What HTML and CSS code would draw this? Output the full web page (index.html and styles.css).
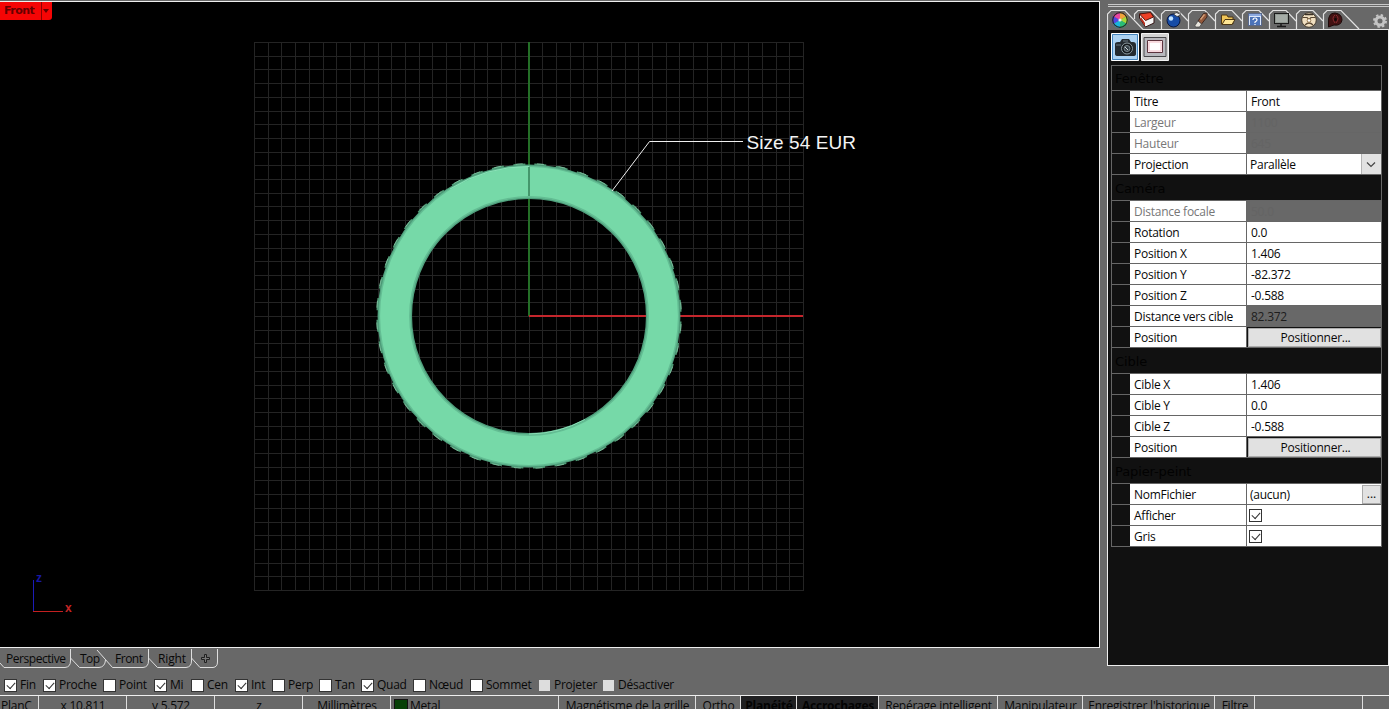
FILE: index.html
```
<!DOCTYPE html>
<html lang="fr">
<head>
<meta charset="utf-8">
<title>Front</title>
<link rel="stylesheet" href="styles.css">
</head>
<body>
<div class="app">
  <div class="work">
    <div class="left">
      <main class="viewport">
        <svg class="scene" width="1099" height="645" viewBox="0 2 1099 645">
          <g id="lines" stroke="#242424" shape-rendering="crispEdges" fill="none"></g>
          <path d="M529 42V316" stroke="#246f27" stroke-width="2"/>
          <path d="M529 316H803" stroke="#c5262c" stroke-width="2"/>
          <circle cx="529" cy="316" r="151.700" fill="none" stroke="#4f9a75" stroke-width="1.800" stroke-dasharray="12 9.670" transform="rotate(-88 529 316)"/>
          <circle cx="529" cy="316" r="152.300" fill="none" stroke="#86c9a7" stroke-width=".8" stroke-dasharray="7 14.750" transform="rotate(-87 529 316)"/>
          <circle cx="529" cy="316" r="134.200" fill="none" stroke="#4f9f7c" stroke-width="34.500"/>
          <circle cx="529" cy="316" r="134.300" fill="none" stroke="#63bd93" stroke-width="32"/>
          <circle cx="529" cy="316" r="134.400" fill="none" stroke="#76d9a8" stroke-width="29"/>
          <path d="M450 189A149.500 149.500 0 0 1 529 166.500" fill="none" stroke="#8ae4b8"/>
          <path d="M529 434A118 118 0 0 0 585 419.500" fill="none" stroke="#8adfb6"/>
          <path d="M529 167V196" stroke="#39865d" stroke-width="1.600"/>
          <path d="M612 191L649.500 141.500H743" fill="none" stroke="#eee"/>
          <text class="size" x="746.500" y="149" textLength="109.500">Size 54 EUR</text>
          <path d="M33 580h1v31h-1z" fill="#1c1cb8"/>
          <path d="M33 611h30v1h-30z" fill="#c42020"/>
          <text class="axis z" x="36" y="582">z</text>
          <text class="axis x" x="65" y="612">x</text>
        </svg>
        <div class="vtitle"><b>Front</b><i></i></div>
      </main>
      <svg class="tabs" width="1099" height="21" viewBox="0 648 1099 21">
        <path d="M0 663L4 667.5H65Q70.500 667 70.500 661V649M70.500 658L79.500 667.500H99Q105 667 105.500 660M97 650L112.500 667.500H143Q148.500 667 148.500 661V649M148.500 658L157.500 667.500H186Q191.500 667 191.500 661V649M191.500 658L200 667.500H213Q217.500 667 217.500 662V649" fill="none" stroke="#dedede"/>
        <text x="6" y="663" textLength="60">Perspective</text>
        <text x="80" y="663" textLength="20">Top</text>
        <text x="115" y="663" textLength="28">Front</text>
        <text x="158" y="663" textLength="28">Right</text>
        <path d="M204.500 654.500h2v3h3v2h-3v3h-2v-3h-3v-2h3z" fill="#777" stroke="#202020"/>
      </svg>
    </div>
    <aside class="side">
      <svg class="ptabs" width="282" height="30" viewBox="1107 0 282 30">
        <path d="M1108 4.500H1389M1108 6.500H1389" stroke="#c9c9c9"/>
        <g fill="none" stroke="#e2e2e2" stroke-width="1.200">
          <path d="M1107.500 30V14L1111 10.500H1125L1143 29.500H1389"/>
          <path d="M1134.500 19V14L1138 10.500H1151L1161 21"/>
          <path id="t" d="M1161.500 29V14L1165 10.500H1178L1188 21"/>
          <use href="#t" x="27"/><use href="#t" x="54"/><use href="#t" x="81"/><use href="#t" x="108"/><use href="#t" x="135"/>
          <path d="M1323.500 29V14L1327 10.500H1341L1359 29"/>
        </g>
        <g>
          <path d="M1120 20V12A8 8 0 0 1 1127 16z" fill="#f1a33a"/><path d="M1120 20L1127 16A8 8 0 0 1 1127 24z" fill="#a6d835"/><path d="M1120 20L1127 24A8 8 0 0 1 1120 28z" fill="#28bd75"/><path d="M1120 20V28A8 8 0 0 1 1113 24z" fill="#1ab6dc"/><path d="M1120 20L1113 24A8 8 0 0 1 1113 16z" fill="#5145e4"/><path d="M1120 20L1113 16A8 8 0 0 1 1120 12z" fill="#e944a0"/>
          <circle cx="1120" cy="20" r="7.300" fill="none" stroke="#282828" stroke-width="1.200"/><circle cx="1120" cy="20" r="1.600" fill="#eee"/>
        </g>
        <path d="M1139.500 14V18L1145.500 27L1154 23V17L1151 13z" fill="#f5f5f5" stroke="#331313"/><path d="M1139.500 14L1150.500 12.500L1153.500 17L1145.500 20.500z" fill="#ed4026" stroke="#52150d"/><path d="M1141 17l4 6v3l-5-7z" fill="#b82d1b"/>
        <circle cx="1173.500" cy="20.500" r="6.500" fill="#174ca6" stroke="#08163f"/><circle cx="1171" cy="18.500" r="2.200" fill="#c0e2ff"/><path d="M1174 14.500l2-2 3 1 1-1v3l-3 1z" fill="#eee" stroke="#333" stroke-width=".8"/>
        <path d="M1198 21L1203.500 13.500L1207 13V17L1201.500 24z" fill="#93583b" stroke="#3e2820"/><path d="M1195 25.500l3-4.500 3.500 3-2 3h-4z" fill="#e8e5dd" stroke="#444" stroke-width=".7"/><path d="M1200 19l4-5 1 1-4 5z" fill="#d5a27b"/>
        <path d="M1221.500 24V15H1227L1228 17H1233V24z" fill="#efc458" stroke="#4d3715"/><path d="M1222 24.500L1225 19.500H1235L1232 24.500z" fill="#ffe795" stroke="#4d3715"/>
        <rect x="1248.500" y="13.500" width="13" height="12" fill="#dce7fa" stroke="#58688c"/><rect x="1249" y="14" width="12" height="2" fill="#8ba9e0"/><rect x="1250" y="17" width="10" height="8" fill="#4b73b9"/><path d="M1253 20q0-2 2-2t2 2q0 1-2 2v1m0 1v1" fill="none" stroke="white" stroke-width="1.200"/>
        <rect x="1274.500" y="13.500" width="14" height="10" fill="#8f9791" stroke="#1b1b1b"/><path d="M1276 15H1287V22H1276z" fill="#a5aca7"/><path d="M1281 24v2M1277 26.500h9" stroke="#181818" stroke-width="1.500"/>
        <circle cx="1309" cy="20" r="7.300" fill="#f0dfc1" stroke="#463d31"/><path d="M1302.500 17.500h4.500l2 2 2-2h4.500M1305 25q4-4 8 0" fill="none" stroke="#5a4833" stroke-width="1.200"/><path d="M1305 14.500h8" stroke="#3b3025" stroke-width="1.500"/><circle cx="1309" cy="20.500" r="1.800" fill="#fff" stroke="#96774b"/>
        <path d="M1328.500 22Q1328 13 1335 13Q1342 14 1342 20Q1341 26 1334 25L1328.500 27z" fill="#421112" stroke="#1b0908"/><path d="M1336 15q4 3 0 8M1335 15q-4 3 0 8" fill="none" stroke="#8a2c2f"/><circle cx="1335.500" cy="19.500" r="1.400" fill="#160808"/>
        <circle cx="1380" cy="21" r="4" fill="none" stroke="#c4c4c4" stroke-width="3"/><circle cx="1380" cy="21" r="6" fill="none" stroke="#c4c4c4" stroke-width="2" stroke-dasharray="2.360 2.352"/>
      </svg>
      <section class="panel">
        <div class="tools">
          <svg width="28" height="28" viewBox="0 0 28 28"><path d="M.5.500h27v27H.5z" fill="#acd2f2" stroke="#fff"/><path d="M1.500 1.500h25v25h-25z" fill="none" stroke="#4484bd"/><path d="M4 11q0-2 3-2h2l2-3h7l2 3h2q3 0 3 3v9q0 2-3 2H7q-3 0-3-2z" fill="#252b30"/><path d="M5 12h5M12 8h5" stroke="#6d7b82"/><circle cx="16" cy="15.500" r="5.500" fill="#15191c" stroke="#8b999f"/><circle cx="16" cy="15.500" r="3" fill="#354047" stroke="#7d898e"/><path d="M14 14l3 3" stroke="#cbd2d5"/></svg>
          <svg width="28" height="28" viewBox="0 0 28 28"><path d="M.5.500h27v27H.5z" fill="#d2d2d2" stroke="#f4f4f4"/><path d="M3 4.500h22v19H3z" fill="#b9b9be" stroke="#48484b"/><path d="M6.500 7.500h15v12h-15z" fill="#fff5f6" stroke="#5d343e"/><path d="M8 9h12v9H8z" fill="#fff" stroke="#f1bcc5"/></svg>
        </div>
        <div class="props">
          <h2 class="first"><span>Fenêtre</span></h2>
          <div class="row"><label>Titre</label><p>Front</p></div>
          <div class="row off"><label>Largeur</label><p>1100</p></div>
          <div class="row off"><label>Hauteur</label><p>645</p></div>
          <div class="row"><label>Projection</label><p class="select">Parallèle<svg width="20" height="20"><path d="M0 0h20v20H0z" fill="#e2e2e2"/><path d="M.5 0v20" stroke="#b5b5b5"/><path d="M6 8.500l4 4 4-4" fill="none" stroke="#444" stroke-width="1.200"/></svg></p></div>
          <h2><span>Caméra</span></h2>
          <div class="row off"><label>Distance focale</label><p>50.0</p></div>
          <div class="row"><label>Rotation</label><p>0.0</p></div>
          <div class="row"><label>Position X</label><p>1.406</p></div>
          <div class="row"><label>Position Y</label><p>-82.372</p></div>
          <div class="row"><label>Position Z</label><p>-0.588</p></div>
          <div class="row ro"><label>Distance vers cible</label><p>82.372</p></div>
          <div class="row"><label>Position</label><button>Positionner...</button></div>
          <h2><span>Cible</span></h2>
          <div class="row"><label>Cible X</label><p>1.406</p></div>
          <div class="row"><label>Cible Y</label><p>0.0</p></div>
          <div class="row"><label>Cible Z</label><p>-0.588</p></div>
          <div class="row"><label>Position</label><button>Positionner...</button></div>
          <h2><span>Papier-peint</span></h2>
          <div class="row"><label>NomFichier</label><p class="file">(aucun)<span class="more">...</span></p></div>
          <div class="row"><label>Afficher</label><p class="check"><i class="box on"></i></p></div>
          <div class="row"><label>Gris</label><p class="check"><i class="box on"></i></p></div>
        </div>
      </section>
    </aside>
  </div>
  <div class="osnap">
    <span><i class="box on"></i>Fin</span><span><i class="box on"></i>Proche</span><span><i class="box"></i>Point</span><span><i class="box on"></i>Mi</span><span><i class="box"></i>Cen</span><span><i class="box on"></i>Int</span><span><i class="box"></i>Perp</span><span><i class="box"></i>Tan</span><span><i class="box on"></i>Quad</span><span><i class="box"></i>Nœud</span><span><i class="box"></i>Sommet</span><span><i class="box dim"></i>Projeter</span><span><i class="box dim"></i>Désactiver</span>
  </div>
  <footer class="status">
    <span class="start">PlanC</span><span>x 10.811</span><span>y 5.572</span><span>z</span><span>Millimètres</span><span class="layer"><i></i>Metal</span><span>Magnétisme de la grille</span><span>Ortho</span><span class="active">Planéité</span><span class="active">Accrochages</span><span>Repérage intelligent</span><span>Manipulateur</span><span>Enregistrer l'historique</span><span>Filtre</span><span></span><span></span>
  </footer>
</div>
<script src="grid.js"></script>
</body>
</html>
```
FILE: grid.js
```
const holder = document.getElementById('lines');
let d = '';
for (let i = 0; i <= 40; i++) {
  const x = 254.5 + Math.round(i * 13.725);
  const y = 42.5 + Math.round(i * 13.7);
  d += `M${x} 42V591M254 ${y}H804`;
}
const path = document.createElementNS('http://www.w3.org/2000/svg', 'path');
path.setAttribute('d', d);
holder.appendChild(path);
```
FILE: styles.css
```
* { box-sizing: border-box; }
body { margin: 0; overflow: hidden; background: #686868; color: #080808; font: 12px/20px "Open Sans", "Noto Sans", sans-serif; letter-spacing: -.25px; }
.app { width: 1389px; height: 709px; overflow: hidden; }
.work { display: flex; justify-content: space-between; height: 672px; }
.left { width: 1100px; padding-top: 1px; }
.viewport { position: relative; height: 647px; border: solid #eee; border-width: 1px 1px 1px 0; background: #000; }
.scene, .tabs, .ptabs { display: block; }
.size { font: 19px "Liberation Sans", sans-serif; fill: #f4f4f4; letter-spacing: 0; }
.axis { font: bold 12px "Liberation Sans", sans-serif; }
.axis.z { fill: #1717a5; }
.axis.x { fill: #c52525; }
.vtitle { position: absolute; left: 0; top: 0; display: flex; width: 52px; height: 18px; padding-left: 4px; border-radius: 0 0 3px 0; background: #f50505; color: #650000; line-height: 17px; }
.vtitle b { width: 38px; border-right: 1px solid #8a0000; font: bold 11px/18px "DejaVu Sans", sans-serif; letter-spacing: -.5px; }
.vtitle i { margin: 7px 0 0 1px; width: 0; height: 0; border: 3px solid transparent; border-top: 4px solid #650000; }
.tabs text { font: 12px "Open Sans", sans-serif; fill: #080808; letter-spacing: 0; }
.side { width: 282px; }
.panel { height: 636px; padding: 3px 0 0 3px; border: solid #eee; border-width: 0 1px 1px 1px; background: #111; }
.tools { display: flex; gap: 2px; height: 32px; }
.props { width: 271px; border: solid #666; border-width: 1px 1px 0 1px; }
h2 { height: 26px; margin: 0; padding: 1px 0 0 3px; border-bottom: 1px solid #666; color: #020202; font: 13px/26px "DejaVu Sans", sans-serif; letter-spacing: -.1px; }
h2.first { height: 25px; line-height: 24px; }
.row { display: grid; grid-template-columns: 117px 134px; height: 21px; padding-left: 18px; border-bottom: 1px solid #666; line-height: 19px; }
.row label { padding: 1px 0 0 4px; border-right: 1px solid #666; background: #fff; line-height: 20px; height: 20px; }
.row p { margin: 0; padding: 1px 0 0 4px; background: #fff; line-height: 20px; height: 20px; }
.off label { color: #777; }
.off p { background: #686868; color: #646464; }
.ro p { background: #686868; color: #1d1d1d; }
.row .select { display: flex; justify-content: space-between; padding-left: 3px; }
.select svg { margin-top: -1px; }
.row .file { display: flex; justify-content: space-between; padding-left: 3px; }
.row .check { padding-left: 2px; }
.row button { margin: 1px 0 0 1px; padding: 0 0 0 2px; border: 1px solid #adadad; background: #e1e1e1; color: #080808; font: inherit; line-height: 17px; letter-spacing: inherit; }
.more { width: 19px; height: 19px; border: 1px solid #aaa; background: #e2e2e2; line-height: 15px; text-align: center; letter-spacing: 0; }
.box { position: relative; display: block; flex: none; width: 13px; height: 13px; border: 1px solid #333; background: #fff; }
.row .box { margin-top: 3px; }
.box.on::after { content: ""; position: absolute; left: 2px; top: 2px; width: 7px; height: 4px; border: solid #333; border-width: 0 0 1.3px 1.3px; transform: rotate(-48deg); }
.box.dim { width: 11px; height: 11px; margin: 1px; border: 0; background: #ddd; }
.osnap { display: grid; grid-template-columns: 39px 60px 51px 37px 44px 37px 47px 42px 52px 57px 68px 64px 100px; height: 23px; padding: 3px 0 0 4px; }
.osnap span { display: flex; align-items: center; gap: 3px; height: 20px; }
.status { display: grid; grid-template-columns: 39px 88px 88px 88px 88px 168px 137px 45px 56px 82px 119px 85px 132px 40px 108px 27px; height: 20px; border-top: 1px solid #eee; line-height: 20px; text-align: center; white-space: nowrap; }
.status span { padding-left: 1px; border-right: 1px solid #ddd; }
.status .start { text-align: left; }
.status .layer { display: flex; gap: 2px; padding-left: 3px; }
.layer i { width: 14px; height: 14px; margin-top: 3px; border: 1px solid #111; background: #064006; }
.status .active { background: #202022; color: #030303; font-weight: bold; }
```
